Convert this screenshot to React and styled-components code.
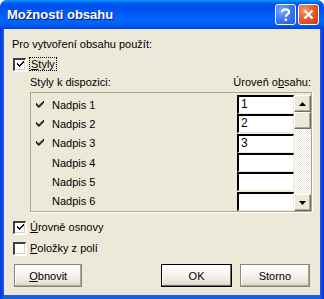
import React from 'react';
import styled, { createGlobalStyle } from 'styled-components';

const GlobalStyle = createGlobalStyle`
  html, body { margin: 0; padding: 0; background: #fff; }
  body { font-family: "Liberation Sans", Arial, sans-serif; font-size: 11px; color: #000; }
`;

const Window = styled.div`
  width: 324px;
  height: 299px;
  box-sizing: border-box;
  border-radius: 7px 7px 0 0;
  display: flex;
  flex-direction: column;
  overflow: hidden;
  padding: 0 4px 4px 4px;
  background: linear-gradient(to right, #0831D9 0, #1660E8 4px, #1660E8 calc(100% - 4px), #0831D9 100%);
`;

const TitleBar = styled.div`
  height: 29px;
  margin: 0 -4px;
  padding: 0 5px 0 7px;
  display: flex;
  align-items: center;
  background: linear-gradient(to bottom, #0997FF 0, #0053EE 4px, #0050EE 8px, #0066FF 20px, #0058F0 26px, #0041CF 29px);
  border-radius: 7px 7px 0 0;
`;

const Title = styled.div`
  flex: 1;
  color: #fff;
  font-weight: bold;
  font-size: 13px;
  text-shadow: 1px 1px 0 #0A1883;
`;

const CapButton = styled.div`
  width: 21px;
  height: 21px;
  box-sizing: border-box;
  border: 1px solid #fff;
  border-radius: 3px;
  margin-left: 2px;
  display: flex;
  align-items: center;
  justify-content: center;
  background: ${p => p.$close
    ? 'radial-gradient(circle at 30% 30%, #F09A7C 0, #E25A2F 50%, #C43A14 100%)'
    : 'radial-gradient(circle at 30% 30%, #7FA8FA 0, #3D76F3 50%, #2457D7 100%)'};
`;

const Body = styled.div`
  flex: 1;
  background: #ECE9D8;
  padding: 8px 4px 0 4px;
  display: flex;
  flex-direction: column;
`;

const Text = styled.div`
  line-height: 14px;
  height: 14px;
  white-space: nowrap;
  padding-left: ${p => p.$pl || 0}px;
`;

const CheckRow = styled.div`
  display: flex;
  align-items: center;
  height: 14px;
  margin-top: ${p => p.$mt || 0}px;
  padding-left: 5px;
  gap: 4px;
`;

const Box = styled.div`
  width: 13px;
  height: 13px;
  box-sizing: border-box;
  background: #fff;
  border-style: solid;
  border-width: 2px 1px 1px 2px;
  border-color: #404040 #fff #fff #404040;
  box-shadow: inset -1px -1px 0 #D4D0C8, 1px 1px 0 #fff;
  display: flex;
  align-items: center;
  justify-content: center;
`;

const Focus = styled.span`
  outline: 1px dotted #000;
  padding: 0 1px;
`;

const U = styled.span`
  text-decoration: underline;
`;

const LabelRow = styled.div`
  display: flex;
  justify-content: space-between;
  padding: 0 5px 0 22px;
  margin-top: 4px;
  height: 14px;
  line-height: 14px;
`;

const ListFrame = styled.div`
  margin: 3px 4px 0 22px;
  height: 120px;
  box-sizing: border-box;
  border: 1px solid #ACA899;
  box-shadow: 1px 1px 0 #fff;
  display: flex;
  padding: 2px 0 0 0;
`;

const Rows = styled.div`
  flex: 1;
  display: flex;
  flex-direction: column;
`;

const Row = styled.div`
  height: 19.4px;
  display: flex;
  align-items: center;
`;

const Mark = styled.div`
  width: 21px;
  padding-left: 5px;
  box-sizing: border-box;
  display: flex;
  align-items: center;
`;

const Name = styled.div`
  flex: 1;
`;

const Edit = styled.div`
  width: 57px;
  height: 19px;
  box-sizing: border-box;
  background: #fff;
  border-style: solid;
  border-width: 2px 1px 1px 2px;
  border-color: #000 #ECE9D8 #ECE9D8 #000;
  padding-left: 2px;
  line-height: 15px;
  font-size: 12px;
`;

const ScrollBar = styled.div`
  width: 17px;
  display: flex;
  flex-direction: column;
  background-image: repeating-conic-gradient(#ECE9D8 0 25%, #fff 0 50%);
  background-size: 2px 2px;
`;

const SButton = styled.div`
  height: 17px;
  width: 17px;
  box-sizing: border-box;
  background: #ECE9D8;
  border-style: solid;
  border-width: 1px;
  border-color: #fff #716F64 #716F64 #fff;
  box-shadow: inset -1px -1px 0 #ACA899;
  display: flex;
  align-items: center;
  justify-content: center;
  margin-top: ${p => p.$push ? 'auto' : '0'};
`;

const Buttons = styled.div`
  display: flex;
  margin-top: 9px;
  padding: 0 6px;
`;

const Btn = styled.button`
  width: ${p => p.$w || 73}px;
  height: 23px;
  box-sizing: border-box;
  font-family: "Liberation Sans", Arial, sans-serif;
  font-size: 11px;
  color: #000;
  background: linear-gradient(to bottom, #FFFFFF 0, #F4F3EE 50%, #E6E3D3 85%, #D6D0C5 100%);
  border: 1px solid ${p => p.$default ? '#000' : '#8B8878'};
  box-shadow: ${p => p.$default ? 'inset -1px -1px 0 #716F64, inset 1px 1px 0 #fff' : 'inset -1px -1px 0 #ACA899, inset 1px 1px 0 #fff'};
  border-radius: 0;
  padding: 0;
  margin-left: ${p => p.$ml || 0}px;
`;

const Check = ({ size = 7 }) => (
  <svg width={size} height={size} viewBox="0 0 7 7">
    <path d="M0 2h1v1h1v1h1V3h1V2h1V1h1V0h1v2H6v1H5v1H4v1H3v1H2V5H1V4H0z" fill="#000" />
  </svg>
);

const levels = [
  { name: 'Nadpis 1', on: true, level: '1' },
  { name: 'Nadpis 2', on: true, level: '2' },
  { name: 'Nadpis 3', on: true, level: '3' },
  { name: 'Nadpis 4', on: false, level: '' },
  { name: 'Nadpis 5', on: false, level: '' },
  { name: 'Nadpis 6', on: false, level: '' },
];

export default function App() {
  return (
    <>
      <GlobalStyle />
      <Window>
        <TitleBar>
          <Title>Možnosti obsahu</Title>
          <CapButton>
            <svg width="11" height="14" viewBox="0 0 11 14">
              <path d="M2 4.2C2 2.2 3.5 1.3 5.5 1.3S9 2.4 9 4.1c0 2.3-3.2 2.4-3.2 4.6" fill="none" stroke="#fff" strokeWidth="2.2" />
              <rect x="4.6" y="10.6" width="2.4" height="2.4" fill="#fff" />
            </svg>
          </CapButton>
          <CapButton $close>
            <svg width="11" height="11" viewBox="0 0 11 11">
              <path d="M1.5 1.5l8 8M9.5 1.5l-8 8" stroke="#fff" strokeWidth="2.2" />
            </svg>
          </CapButton>
        </TitleBar>
        <Body>
          <Text $pl={4}>Pro vytvoření obsahu použít:</Text>
          <CheckRow $mt={6}>
            <Box><Check /></Box>
            <Focus><U>S</U>tyly</Focus>
          </CheckRow>
          <LabelRow>
            <span>Styly k dispozici:</span>
            <span>Úroveň o<U>b</U>sahu:</span>
          </LabelRow>
          <ListFrame>
            <Rows>
              {levels.map(l => (
                <Row key={l.name}>
                  <Mark>{l.on && <Check size={8} />}</Mark>
                  <Name>{l.name}</Name>
                  <Edit>{l.level}</Edit>
                </Row>
              ))}
            </Rows>
            <ScrollBar>
              <SButton>
                <svg width="7" height="4" viewBox="0 0 7 4"><path d="M3.5 0L7 4H0z" fill="#000" /></svg>
              </SButton>
              <SButton />
              <SButton $push>
                <svg width="7" height="4" viewBox="0 0 7 4"><path d="M0 0h7L3.5 4z" fill="#000" /></svg>
              </SButton>
            </ScrollBar>
          </ListFrame>
          <CheckRow $mt={8}>
            <Box><Check /></Box>
            <span><U>Ú</U>rovně osnovy</span>
          </CheckRow>
          <CheckRow $mt={7}>
            <Box />
            <span><U>P</U>oložky z polí</span>
          </CheckRow>
          <Buttons>
            <Btn $w={71}><U>O</U>bnovit</Btn>
            <Btn $ml={79} $default>OK</Btn>
            <Btn $ml={8}>Storno</Btn>
          </Buttons>
        </Body>
      </Window>
    </>
  );
}
